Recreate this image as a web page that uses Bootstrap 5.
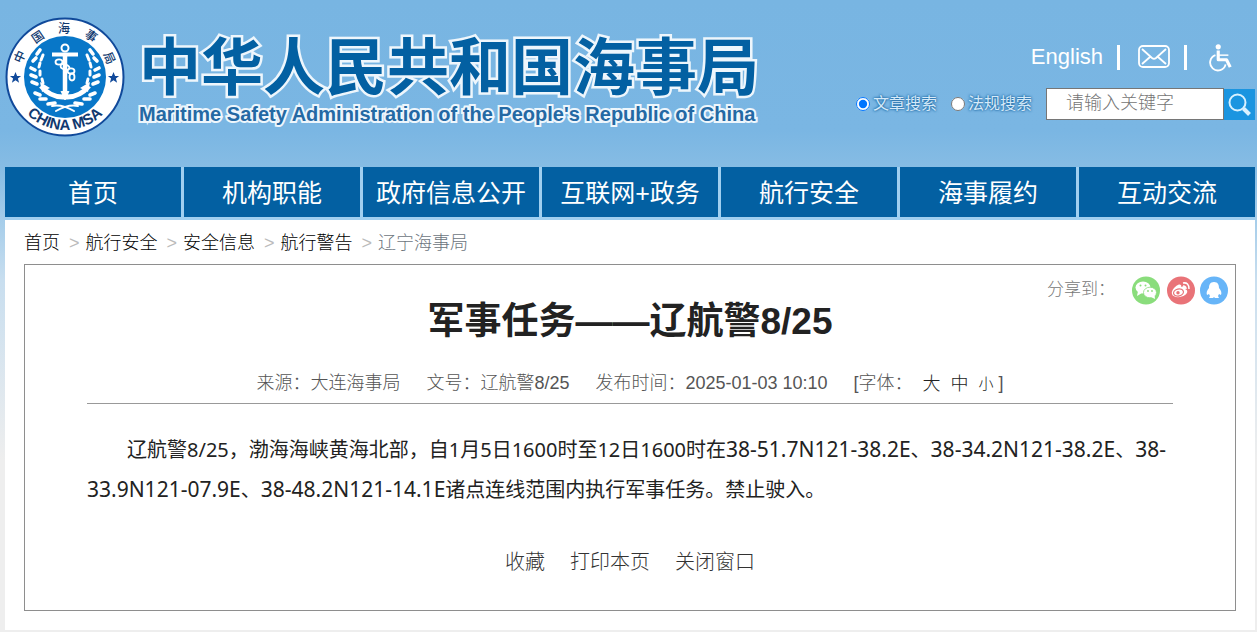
<!DOCTYPE html>
<html lang="zh-CN">
<head>
<meta charset="utf-8">
<meta name="viewport" content="width=device-width, initial-scale=1">
<title>军事任务——辽航警8/25</title>
<link rel="stylesheet" href="https://cdn.jsdelivr.net/npm/bootstrap@5.3.0/dist/css/bootstrap.min.css">
<style>
  :root { --msa-blue: #0360a2; }
  body {
    font-family: "Liberation Sans", "Noto Sans CJK SC", sans-serif;
    font-size: 18px; line-height: 24px; color: #333;
    background: #eee linear-gradient(#78b5e2 0, #7ab6e3 130px, #86bce4 167px, #a5cdea 220px, #c8deef 280px, #eee 460px) no-repeat;
  }
  a { color: inherit; text-decoration: none; }
  .page-shell { padding: 0 2px 2px 5px; }
  .masthead { height: 167px; }
  .emblem { width: 120px; height: 120px; margin-top: 17px; }
  .brand-text { margin: 26px 0 0 14px; color: var(--msa-blue); white-space: nowrap; }
  .brand-zh {
    font: 700 62px/74px "Noto Sans CJK SC", sans-serif;
    -webkit-text-stroke: 5px #eef6fc; paint-order: stroke fill;
  }
  .brand-en {
    font-size: 20px; line-height: 28px; font-weight: 700; color: #2469a4;
    -webkit-text-stroke: 4px #eef6fc; paint-order: stroke fill;
  }
  .tools { padding-top: 41px; }
  .tool-links { height: 32px; color: #fff; font-size: 22px; padding-right: 22px; gap: 14px; }
  .divider { width: 3px; height: 25px; background: #fff; }
  .search-row { margin-top: 15px; }
  .search-row label { font-size: 16px; color: #d5eafa; text-shadow: 0 0 2px #1763a0, 0 0 3px #1763a0; margin-right: 14px; }
  .search-row input[type=radio] { width: 14px; height: 14px; margin: 0 3px 0 0; }
  .keyword { width: 178px; height: 32px; border: 1px solid #767676; padding: 0 0 2px 19px; font-size: 18px; border-radius: 0; }
  .keyword::placeholder { color: #757575; font-weight: 300; opacity: 1; }
  .search-btn { width: 31px; height: 31px; background: #1b95e0; border: 0; padding: 0; }
  .main-nav { gap: 3px; border-bottom: 3px solid #a0cff0; background: #a0cff0; }
  .main-nav a { flex: 1 1 0; height: 50px; line-height: 52px; background: var(--msa-blue); color: #fff; text-align: center; font-size: 25px; white-space: nowrap; }
  .sheet { background: #fff; padding: 11px 19px 19px; }
  .crumbs { gap: 6px; font-weight: 300; color: #000; margin-bottom: 9px; }
  .crumbs .sep { color: #bbb; padding-left: 3px; }
  .article { border: 1px solid #8e8e8e; padding: 10px 6px 36px 62px; }
  .share { height: 30px; color: #777; font-weight: 300; font-size: 17px; }
  .article-body { margin-right: 56px; }
  h1 { font-size: 37px; line-height: 44px; font-weight: 700; color: #222; margin: -5px 0 0; }
  .meta { gap: 26px; font-weight: 300; color: #555; margin-top: 27px; padding-bottom: 7px; border-bottom: 1px solid #999; }
  .sizes { gap: 10px; }
  .sizes button { border: 0; background: none; padding: 0; color: #222; font-weight: 300; }
  .sizes .s { font-size: 15px; }
  .notice { font-family: "Noto Sans", "Noto Sans CJK SC", sans-serif; font-size: 20px; line-height: 40px; text-indent: 2em; color: #222; margin: 26px 0 0; font-weight: 400; }
  .coord { font-size: 21px; line-height: 1; }
  .actions { gap: 25px; margin-top: 40px; font-size: 20px; font-weight: 300; }
  .actions button { border: 0; background: none; padding: 0; color: #333; font-weight: 300; }
</style>
</head>
<body>
<div class="page-shell">
  <header class="masthead d-flex justify-content-between">
    <div class="d-flex">
      <svg class="emblem flex-shrink-0" viewBox="0 0 120 120" role="img" aria-label="中国海事局">
        <defs>
          <path id="arcBottom" d="M7 60A53 53 0 0 0 113 60"/>
        </defs>
        <circle cx="60" cy="60" r="58.500" fill="#fff" stroke="#10499a" stroke-width="2"/>
        <circle cx="60" cy="60" r="41" fill="#0877c8"/>
        <g fill="#10396f" font-family="Noto Sans CJK SC, sans-serif" font-size="12" font-weight="500" text-anchor="middle">
          <text transform="translate(15 40) rotate(-66) translate(0 4)">中</text>
          <text transform="translate(33 20) rotate(-34) translate(0 4)">国</text>
          <text transform="translate(59 12) translate(0 4)">海</text>
          <text transform="translate(86 19) rotate(34) translate(0 4)">事</text>
          <text transform="translate(104 41) rotate(66) translate(0 4)">局</text>
        </g>
        <text fill="#10396f" font-family="Liberation Sans, sans-serif" font-weight="700" font-size="15" text-anchor="middle"><textPath href="#arcBottom" startOffset="50%">CHINA MSA</textPath></text>
        <g fill="#10499a">
          <path id="star" d="M10.500 55l1.600 4h4l-3.200 2.600 1.200 4.200-3.600-2.500-3.600 2.500 1.200-4.200-3.200-2.600h4z"/>
          <use href="#star" x="98"/>
        </g>
        <g fill="none" stroke="#fff">
          <circle cx="60" cy="31" r="3.500" stroke-width="2"/>
          <path d="M47 37.500H73" stroke-width="4"/>
          <path d="M60 36V80" stroke-width="4.500"/>
          <path d="M36 69Q46 81 60 80Q74 81 84 69" stroke-width="5"/>
          <path d="M56 74L60 83L64 74" fill="#fff"/>
          <g stroke-width="1.800"><ellipse cx="54" cy="45" rx="3.500" ry="2.600"/><ellipse cx="60" cy="50" rx="4.500" ry="2.600" transform="rotate(20 60 50)"/><ellipse cx="66" cy="54" rx="3.500" ry="2.600"/><ellipse cx="67" cy="60" rx="2.500" ry="3.500"/></g>
          <g id="wreath" stroke-width="3.600" stroke-linecap="round">
            <path d="M32 37l3-4M28 44l3-3M26 51l4 2M26 58l5 2M27 65l5 2M30 76l5 2M35 82l6 0M43 87l7-1"/>
            <path d="M38 38l-2 5M35 46l-1 4M35 54v4M37 62l1 4" stroke-width="3"/>
            <path d="M47 89Q57 87 69 94" stroke-width="2"/>
          </g>
          <use href="#wreath" transform="matrix(-1 0 0 1 120 0)"/>
        </g>
        <path d="M35 65l10 6-8 4zM85 65l-10 6 8 4z" fill="#fff"/>
      </svg>
      <div class="brand-text">
        <div class="brand-zh">中华人民共和国海事局</div>
        <div class="brand-en">Maritime Safety Administration of the People's Republic of China</div>
      </div>
    </div>
    <div class="tools flex-shrink-0">
      <div class="tool-links d-flex align-items-center justify-content-end">
        <a href="#">English</a>
        <span class="divider"></span>
        <a href="#" class="d-flex ms-1" aria-label="邮箱"><svg width="32" height="24" viewBox="0 0 32 24" fill="none" stroke="#fff" stroke-width="1.800"><rect x="1" y="1" width="30" height="21" rx="4"/><path d="M4 4l10 9q2 1.500 4 0l10-9M4 19l8-7M28 19l-8-7"/></svg></a>
        <span class="divider"></span>
        <a href="#" class="d-flex ms-2" aria-label="无障碍"><svg width="24" height="30" viewBox="0 0 26 30" fill="none" stroke="#fff"><circle cx="10" cy="4" r="2.800" fill="#fff" stroke="none"/><path d="M10 8v10h9l4 8" stroke-width="3.400" stroke-linejoin="round"/><path d="M11 13h10" stroke-width="1.600"/><path d="M7 13A8.500 8.500 0 1 0 18 23" stroke-width="2"/></svg></a>
      </div>
      <form class="search-row d-flex align-items-center" onsubmit="return false">
        <input type="radio" name="scope" id="scopeArticle" checked><label for="scopeArticle">文章搜索</label>
        <input type="radio" name="scope" id="scopeLaw"><label for="scopeLaw">法规搜索</label>
        <input type="text" class="keyword" placeholder="请输入关键字" aria-label="请输入关键字">
        <button class="search-btn d-flex align-items-center justify-content-center" aria-label="搜索"><svg width="25" height="25" viewBox="0 0 25 25" fill="none" stroke="#d8f1ff"><circle cx="10.500" cy="10.500" r="8" stroke-width="2"/><path d="M16.500 16.500l6 6" stroke-width="4"/></svg></button>
      </form>
    </div>
  </header>
  <nav class="main-nav d-flex">
    <a href="#">首页</a><a href="#">机构职能</a><a href="#">政府信息公开</a><a href="#">互联网+政务</a><a href="#">航行安全</a><a href="#">海事履约</a><a href="#">互动交流</a>
  </nav>
  <main class="sheet">
    <nav class="crumbs d-flex" aria-label="breadcrumb">
      <a href="#">首页</a><span class="sep">&gt;</span><a href="#">航行安全</a><span class="sep">&gt;</span><a href="#">安全信息</a><span class="sep">&gt;</span><a href="#">航行警告</a><span class="sep">&gt;</span><span class="text-secondary">辽宁海事局</span>
    </nav>
    <article class="article">
      <div class="share d-flex justify-content-end align-items-center">
        <span class="me-3">分享到：</span>
        <a href="#" class="d-flex" aria-label="微信"><svg width="30" height="30" viewBox="0 0 30 30"><circle cx="15" cy="15.500" r="14" fill="#8add7c"/><g fill="#fff"><ellipse cx="12" cy="12.500" rx="7.500" ry="6"/><path d="M7 16l-1 5 5-3z"/></g><ellipse cx="19" cy="17.500" rx="6.500" ry="5.300" fill="#fff" stroke="#8add7c" stroke-width=".8"/><path d="M20 22l4 2-.5-4z" fill="#fff"/><g fill="#8add7c"><circle cx="9.500" cy="10.500" r="1"/><circle cx="14.500" cy="10.500" r="1"/><circle cx="17" cy="16" r=".9"/><circle cx="21" cy="16" r=".9"/></g></svg></a>
        <a href="#" class="d-flex ms-1" aria-label="微博"><svg width="30" height="30" viewBox="0 0 30 30"><circle cx="16" cy="15.500" r="14" fill="#e97378"/><path d="M13 10c2-1 4 0 3 2 3-1 5 0 4 2 3 1 3 4 0 6-4 3-12 3-13-1-1-3 3-8 6-9z" fill="#fff"/><ellipse cx="13.500" cy="17.500" rx="5" ry="3.500" fill="none" stroke="#e97378" stroke-width="1.200" transform="rotate(-12 13.500 17.500)"/><circle cx="13" cy="17.700" r="1.700" fill="#e97378"/><path d="M18 11q3 0 3 3M18 8q6-1 6 6" fill="none" stroke="#fff" stroke-width="1.500"/></svg></a>
        <a href="#" class="d-flex ms-1" aria-label="QQ"><svg width="30" height="30" viewBox="0 0 30 30"><circle cx="15" cy="15.500" r="14" fill="#67b5f8"/><path d="M15 7c4 0 5 3 5 6 2 2 3 5 2 7l-2-1-1 2 1 2h-4l-1-1-1 1h-4l1-2-1-2-2 1c-1-2 0-5 2-7 0-3 1-6 5-6z" fill="#fff"/></svg></a>
      </div>
      <div class="article-body">
        <h1 class="text-center">军事任务——辽航警8/25</h1>
        <div class="meta d-flex justify-content-center">
          <span>来源：大连海事局</span><span>文号：辽航警8/25</span><span>发布时间：2025-01-03 10:10</span>
          <span class="sizes d-flex"><span>[字体：</span><button>大</button><button>中</button><span><button class="s">小</button> ]</span></span>
        </div>
        <p class="notice">辽航警8/25，渤海海峡黄海北部，自1月5日1600时至12日1600时在<span class="coord">38-51.7N121-38.2E</span>、<span class="coord">38-34.2N121-38.2E</span>、<span class="coord">38-33.9N121-07.9E</span>、<span class="coord">38-48.2N121-14.1E</span>诸点连线范围内执行军事任务。禁止驶入。</p>
        <div class="actions d-flex justify-content-center">
          <button>收藏</button><button>打印本页</button><button>关闭窗口</button>
        </div>
      </div>
    </article>
  </main>
</div>
<script src="https://cdn.jsdelivr.net/npm/bootstrap@5.3.0/dist/js/bootstrap.bundle.min.js"></script>
</body>
</html>
